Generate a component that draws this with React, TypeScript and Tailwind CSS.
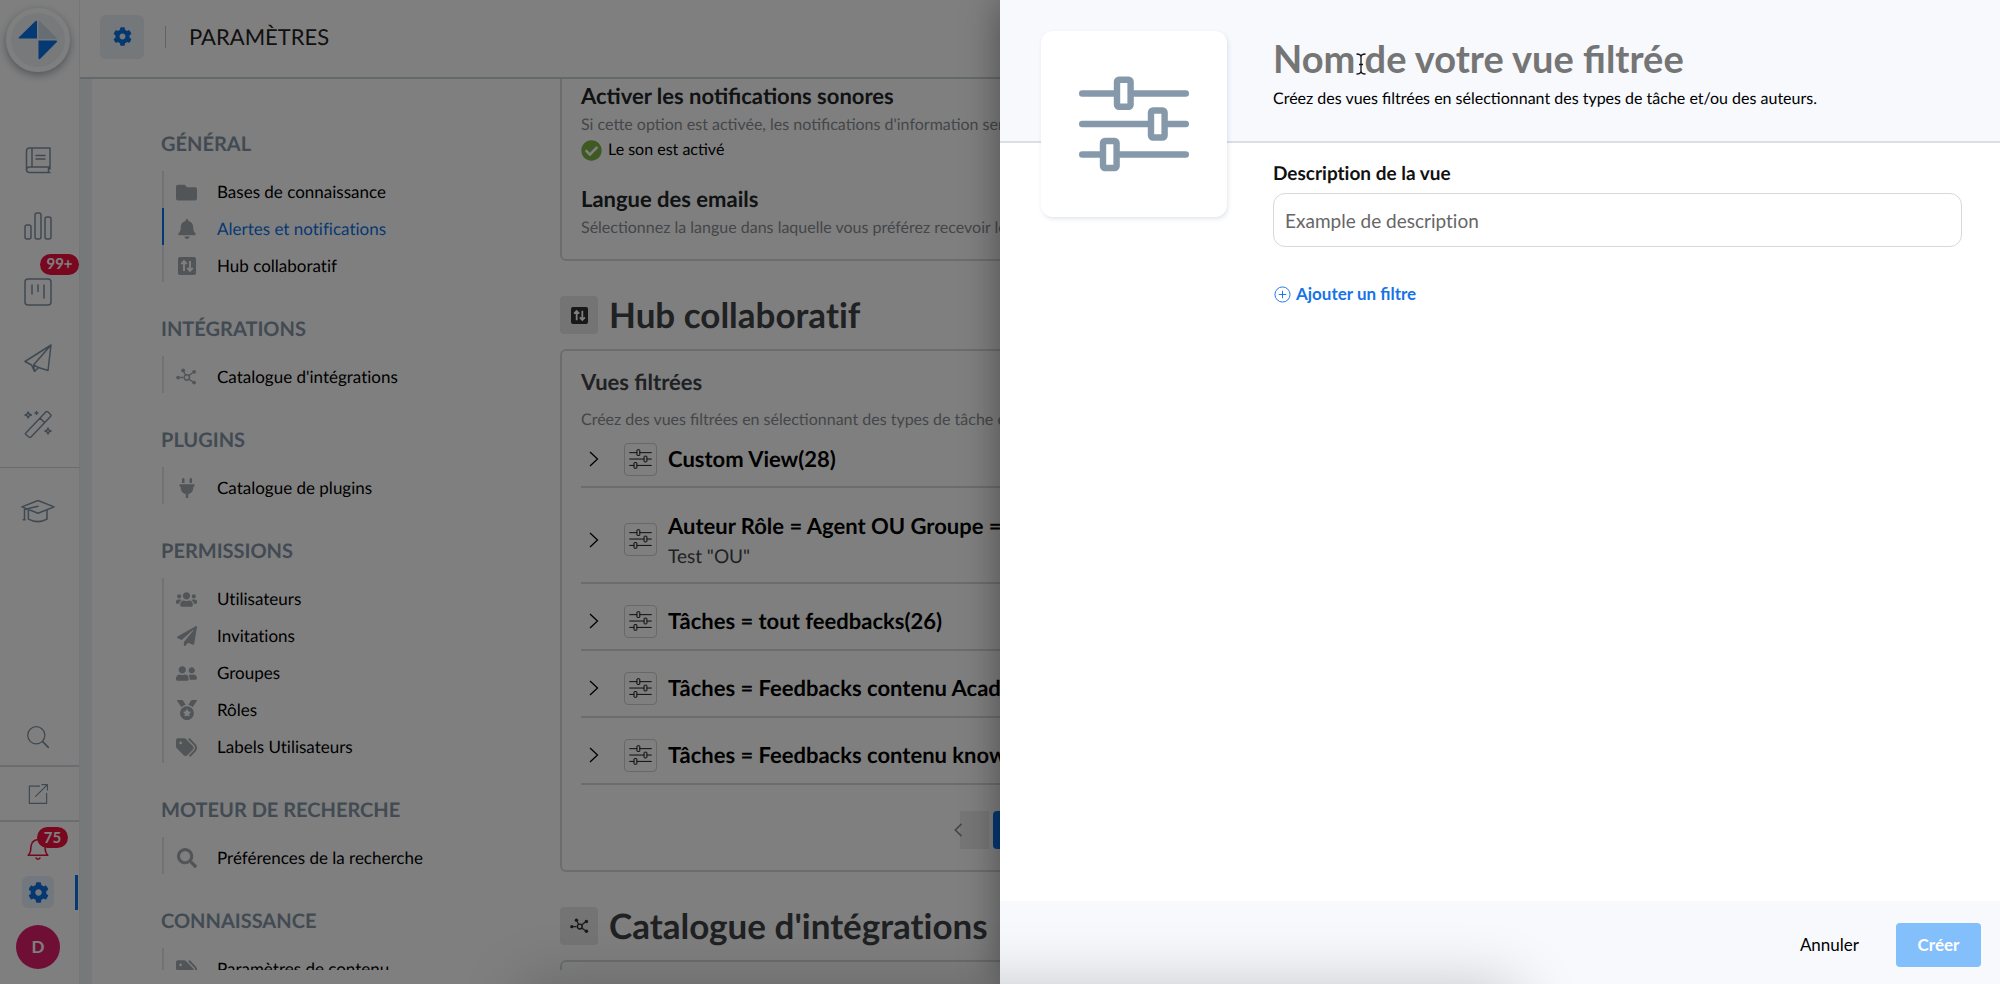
import React from 'react';
import { FaFolder, FaBell, FaPlug, FaUsers, FaPaperPlane, FaUserFriends, FaMedal, FaSearch, FaCheckCircle, FaCog } from 'react-icons/fa';
import { FaTags } from 'react-icons/fa6';

type IconProps = { className?: string };

function SlidersIcon({ className, heavy }: IconProps & { heavy?: boolean }) {
  const w = heavy ? 6.4 : 4.6;
  return (
    <svg viewBox="0 0 110 96" className={className} fill="none" stroke="currentColor" strokeWidth={w} aria-hidden="true">
      <path d="M3.200 17.500H37M53 17.500H106.800M3.200 48H71M87 48H106.800M3.200 78.500H23M39 78.500H106.800" strokeLinecap="round" />
      <rect x="38" y="3.800" width="13.600" height="27" rx="2" />
      <rect x="72" y="34.500" width="13.600" height="27" rx="2" />
      <rect x="24" y="65" width="13.600" height="27" rx="2" />
    </svg>
  );
}

function NetworkIcon({ className }: IconProps) {
  return (
    <svg viewBox="0 0 22 18" className={className} fill="currentColor" aria-hidden="true">
      <circle cx="2.200" cy="10" r="2" />
      <circle cx="7.500" cy="2.600" r="2" />
      <circle cx="19" cy="4" r="2" />
      <circle cx="19" cy="15.300" r="2" />
      <path d="M4 10h3.500M8.200 4l2 3.600M13.500 8l4-3M13.300 11.600l4.500 3" stroke="currentColor" strokeWidth="1.400" />
      <circle cx="11.300" cy="9.900" r="2.800" fill="none" stroke="currentColor" strokeWidth="1.700" />
    </svg>
  );
}

function HubIcon({ className }: IconProps) {
  return (
    <svg viewBox="0 0 18 18" className={className} aria-hidden="true">
      <rect width="18" height="18" rx="2" fill="currentColor" />
      <path d="M6 14V4.500M3.300 7L6 4.200 8.700 7M12 4v9.500M9.300 11l2.700 2.800 2.700-2.800" fill="none" stroke="#fff" strokeWidth="1.900" />
    </svg>
  );
}

function Line({ children, className }: IconProps & { children: React.ReactNode }) {
  return (
    <svg viewBox="0 0 28 28" className={className ?? 'size-7'} fill="none" stroke="currentColor" strokeWidth="1.500" strokeLinejoin="round" strokeLinecap="round" aria-hidden="true">
      {children}
    </svg>
  );
}

const sections = [
  { title: 'GÉNÉRAL', items: [
    { label: 'Bases de connaissance', icon: <FaFolder className="size-[21px]" /> },
    { label: 'Alertes et notifications', icon: <FaBell className="size-5" />, active: true },
    { label: 'Hub collaboratif', icon: <HubIcon className="size-[18px]" /> },
  ] },
  { title: 'INTÉGRATIONS', items: [{ label: "Catalogue d'intégrations", icon: <NetworkIcon className="w-[21px]" /> }] },
  { title: 'PLUGINS', items: [{ label: 'Catalogue de plugins', icon: <FaPlug className="size-5" /> }] },
  { title: 'PERMISSIONS', items: [
    { label: 'Utilisateurs', icon: <FaUsers className="size-[21px]" /> },
    { label: 'Invitations', icon: <FaPaperPlane className="size-5" /> },
    { label: 'Groupes', icon: <FaUserFriends className="size-[21px]" /> },
    { label: 'Rôles', icon: <FaMedal className="size-5" /> },
    { label: 'Labels Utilisateurs', icon: <FaTags className="size-[21px]" /> },
  ] },
  { title: 'MOTEUR DE RECHERCHE', items: [{ label: 'Préférences de la recherche', icon: <FaSearch className="size-5" /> }] },
  { title: 'CONNAISSANCE', items: [{ label: 'Paramètres de contenu', icon: <FaTags className="size-[21px]" /> }] },
];

const views = [
  { name: 'Custom View(28)' },
  { name: 'Auteur Rôle = Agent OU Groupe = Support', note: 'Test "OU"' },
  { name: 'Tâches = tout feedbacks(26)' },
  { name: 'Tâches = Feedbacks contenu Academy(12)' },
  { name: 'Tâches = Feedbacks contenu knowledge(14)' },
];

function Rail() {
  return (
    <nav aria-label="Principal" className="flex w-20 shrink-0 flex-col items-center border-r border-[#e6eaee] text-[#8093a5]">
      <a href="#accueil" aria-label="Accueil" className="mt-2 mr-[3px] flex size-16 items-center justify-center rounded-full border-[5px] border-white bg-[#eef3f6] shadow-[0_3px_8px_rgba(40,60,90,0.45)]">
        <svg viewBox="0 0 40 40" className="size-10" aria-hidden="true">
          <path d="M19 1.500V18.500H1.500Q0 18.500 1 17.300L17 1.500Q19 0 19 1.500Z" fill="#0b72e7" />
          <path d="M20.500 1.500Q20.500 0 22 1.500L38.500 17.500Q39.500 19 38 19H20.500Z" fill="#cddbe7" />
          <path d="M20.500 20.500H38Q40 20.500 38.800 22L22.500 38.500Q20.500 40 20.500 38Z" fill="#0b72e7" />
        </svg>
      </a>
      <div className="mt-[74px] mr-[3px] flex flex-col gap-[38px]">
        <a href="#contenus" aria-label="Contenus"><Line>
          <path d="M26 23V2H5.500Q2.500 2 2.500 5V23.500Q2.500 26.500 5.500 26.500H26M26 21H5.500Q2.500 21 2.500 23.800M8 2V21M12 9.500H21M12 13H21M24.500 21V26.500" />
        </Line></a>
        <a href="#stats" aria-label="Statistiques"><Line>
          <rect x="1" y="13" width="6" height="14" rx="2" /><rect x="11" y="1" width="6" height="26" rx="2" /><rect x="21" y="5" width="6" height="22" rx="2" />
        </Line></a>
        <a href="#hub" aria-label="Hub collaboratif" className="relative"><Line>
          <rect x="1" y="1" width="26" height="26" rx="3" /><path d="M8 7V16M14 7V13.500M20 7V20" />
        </Line>
          <span className="absolute -top-6 left-4 flex h-[21px] w-[39px] items-center justify-center rounded-full bg-[#f0103f] text-[15px] font-bold text-white">99+</span>
        </a>
        <a href="#envois" aria-label="Envois"><Line>
          <path d="M27 1L1 17.500L7.500 21L10.500 27.500L14.500 23.500L24 26.500Z M27 1L9.500 21L10.500 27.500M9.500 21L14.500 23.500" />
        </Line></a>
        <a href="#outils" aria-label="Outils"><Line>
          <path d="M1.800 23L22 1.800Q23 1 24 2L26.500 4.500Q27.500 5.500 26.500 6.500L7 27Q6 28 5 27L1.800 24.500Q1 23.700 1.800 23ZM16 8L20.500 12.500M4 2Q4.500 4.500 7.500 5Q4.500 5.500 4.200 8Q3.800 5.500 1 5Q3.800 4.500 4 2M12.500 1.500V4.500M11 3H14M24 18Q24.300 20.500 27 21Q24.300 21.500 24 24Q23.700 21.500 21 21Q23.700 20.500 24 18" />
        </Line></a>
      </div>
      <div className="mt-[29px] w-full border-t border-[#cfd8df] pt-[26px] pr-[3px]">
        <a href="#academie" aria-label="Académie" className="flex justify-center"><Line className="size-9">
          <path d="M1.500 10L14 5L26.500 10L14 15Z M6.500 12V19.500Q14 23.500 21 19.500V12M14 9.500L3.500 12V20M2.500 20H4" strokeWidth="1.200" />
        </Line></a>
      </div>
      <div className="mt-auto flex w-full flex-col items-center">
        <button type="button" aria-label="Rechercher" className="mr-[3px] mb-4"><Line className="size-6">
          <circle cx="12" cy="12" r="10" /><path d="M19.500 19.500L26 26" strokeWidth="2" />
        </Line></button>
        <div className="flex h-[57px] w-full items-center justify-center border-y-2 border-[#d5dde3] pr-[3px]">
          <a href="#site" aria-label="Ouvrir le site"><Line className="size-[22px]">
            <path d="M16 4H3V26H25V13M11 17L26 2M19 2H26V9" />
          </Line></a>
        </div>
        <button type="button" aria-label="Alertes" className="relative mt-4 mr-[3px] text-[#f0103f]"><Line className="size-[22px]">
          <path d="M1.500 22H26.500Q23 18.500 23 11Q22 3 14 2Q6 3 5 11Q5 18.500 1.500 22ZM11.500 25.500Q14 28.500 16.500 25.500" strokeWidth="2" />
        </Line>
          <span className="absolute -top-[11px] left-[10px] flex h-[21px] w-[31px] items-center justify-center rounded-full bg-[#f0103f] text-[15px] font-bold text-white">75</span>
        </button>
        <div className="relative mt-4 flex w-full justify-center pr-[3px] text-[#0b6fe0]">
          <a href="#parametres" aria-label="Paramètres" className="flex size-8 items-center justify-center rounded-md bg-[#e7f1fc]"><FaCog className="size-[21px]" /></a>
          <span className="absolute -top-px right-px h-[35px] w-[3px] bg-[#0b72e7]" />
        </div>
        <button type="button" className="mt-[17px] mr-[3px] mb-[15px] flex size-11 items-center justify-center rounded-full bg-[#e01f6d] text-[17px] font-bold text-white">D</button>
      </div>
    </nav>
  );
}

function SideMenu() {
  return (
    <nav aria-label="Paramètres" className="h-full w-[468px] shrink-0 overflow-hidden pt-[50px] pl-[69px] [font-variant-ligatures:none]">
      {sections.map((s) => (
        <section key={s.title} className="mb-8">
          <h2 className="mb-3 text-xl leading-[30px] font-bold text-[#8495a6]">{s.title}</h2>
          <ul>
            {s.items.map((it) => (
              <li key={it.label}>
                <a href="#section" className={it.active ? 'ml-px flex h-[37px] items-center border-l-2 border-[#0b72e7] pt-[5px] text-[#0b72e7]' : 'ml-px flex h-[37px] items-center border-l-2 border-[#e1e7ec] pt-[5px] text-black'}>
                  <span className="ml-[11px] flex w-[23px] justify-center text-[#a3abb1]">{it.icon}</span>
                  <span className="ml-[19px] text-[17px]">{it.label}</span>
                </a>
              </li>
            ))}
          </ul>
        </section>
      ))}
    </nav>
  );
}

function PageTitle({ icon, children }: { icon: React.ReactNode; children: React.ReactNode }) {
  return (
    <div className="mt-[35px] mb-[15px] flex items-center gap-[11px]">
      <span className="flex size-[38px] items-center justify-center rounded-sm bg-[#e8e8e8] text-[#303030]">{icon}</span>
      <h1 className="text-[35px] leading-[38px] font-bold text-[#404347] [font-variant-ligatures:none]">{children}</h1>
    </div>
  );
}

function Settings() {
  return (
    <main className="h-full grow overflow-hidden pr-10">
      <section className="-mt-2 h-[190px] rounded-md border-2 border-[#d4dade] px-[19px] pt-[9px] whitespace-nowrap">
        <h2 className="text-[22px] leading-7 font-bold text-[#222427]">Activer les notifications sonores</h2>
        <p className="mt-0.5 text-base leading-[26px] text-[#8a8d92]">Si cette option est activée, les notifications d'information seront accompagnées d'un son.</p>
        <p className="flex items-center gap-1.5 text-base leading-6 text-black"><FaCheckCircle className="size-[21px] text-[#7cb342]" />Le son est activé</p>
        <h2 className="mt-[23px] text-[22px] leading-7 font-bold text-[#222427]">Langue des emails</h2>
        <p className="mt-0.5 text-base leading-[26px] text-[#8a8d92]">Sélectionnez la langue dans laquelle vous préférez recevoir les emails.</p>
      </section>

      <PageTitle icon={<HubIcon className="size-[17px]" />}>Hub collaboratif</PageTitle>
      <section className="h-[523px] rounded-md border-2 border-[#d4dade] px-[19px] pt-[17px] whitespace-nowrap">
        <h2 className="text-[22px] leading-7 font-bold text-[#404347]">Vues filtrées</h2>
        <p className="mt-3 text-base leading-6 text-[#8a8d92]">Créez des vues filtrées en sélectionnant des types de tâche et/ou des auteurs.</p>
        <ul>
          {views.map((v, i) => (
            <li key={v.name} className={v.note ? 'flex h-24 items-center border-b-2 border-[#d4dade] pt-[9px]' : i === 0 ? 'flex h-14 items-center border-b-2 border-[#d4dade]' : 'flex h-[67px] items-center border-b-2 border-[#d4dade] pt-[9px]'}>
              <button type="button" aria-label="Déplier" className="ml-2 w-[10px]">
                <svg viewBox="0 0 10 16" className="h-4 w-[10px]" fill="none" stroke="#000" strokeWidth="1.300" aria-hidden="true"><path d="M1 1L8.500 8L1 15" /></svg>
              </button>
              <span className="ml-[25px] flex size-[33px] items-center justify-center rounded-sm border border-[#d0d0d0] text-[#111]"><SlidersIcon className="w-[23px]" /></span>
              <div className="ml-[11px] text-black">
                <h3 className={v.note ? 'pt-1 text-[22px] leading-[30px] font-bold' : 'text-[22px] leading-[30px] font-bold'}>{v.name}</h3>
                {v.note && <p className="text-[19px] leading-8 text-[#404347]">{v.note}</p>}
              </div>
            </li>
          ))}
        </ul>
        <div className="mt-[26px] flex items-center gap-1 pl-[372px]">
          <button type="button" aria-label="Page précédente" className="flex h-[38px] w-9 items-center bg-linear-to-r from-transparent from-20% to-[#ececec] to-20% text-[#909090]">
            <svg viewBox="0 0 10 16" className="h-[14px] w-[10px]" fill="none" stroke="currentColor" strokeWidth="2" aria-hidden="true"><path d="M9 1L2 8L9 15" /></svg>
          </button>
          <button type="button" className="h-[38px] w-[38px] rounded-sm bg-[#0b72e7] text-white">1</button>
        </div>
      </section>

      <PageTitle icon={<NetworkIcon className="w-[19px]" />}>Catalogue d'intégrations</PageTitle>
      <section className="h-40 rounded-md border-2 border-[#d4dade]" />
    </main>
  );
}

function Drawer() {
  return (
    <form role="dialog" aria-label="Nouvelle vue filtrée" className="absolute inset-y-0 right-0 flex w-1/2 flex-col bg-white shadow-[0_0_36px_rgba(0,0,0,0.4)]">
      <header className="flex h-[143px] shrink-0 gap-[46px] border-b-2 border-[#dbdfe4] bg-[#f7f9fd] pl-[41px]">
        <div className="z-10 mt-[31px] flex size-[186px] shrink-0 items-center justify-center rounded-xl bg-white text-[#8699aa] shadow-[1px_2px_4px_rgba(60,80,120,0.15)]">
          <SlidersIcon heavy className="w-[110px]" />
        </div>
        <div className="relative grow pt-[31px] pr-10">
          <input aria-label="Nom de la vue" placeholder="Nom de votre vue filtrée" className="block h-[54px] w-full bg-transparent text-[38px] font-bold outline-none placeholder:text-[#757575]" />
          <p className="mt-px text-base leading-[26px] text-black">Créez des vues filtrées en sélectionnant des types de tâche et/ou des auteurs.</p>
          <svg viewBox="0 0 10 22" className="absolute top-[53px] left-[83px] h-[22px] w-[10px]" fill="none" stroke="#111" strokeWidth="1.300" aria-hidden="true">
            <path d="M0.500 1Q5 1 5 4V18Q5 21 0.500 21M9.500 1Q5 1 5 4M5 18Q5 21 9.500 21M3 11.500H7" />
          </svg>
        </div>
      </header>
      <div className="grow pt-[17px] pr-[38px] pl-[273px]">
        <label htmlFor="desc" className="block text-[19px] leading-7 font-bold text-[#111] [font-variant-ligatures:none]">Description de la vue</label>
        <input id="desc" placeholder="Example de description" className="mt-[5px] block h-[54px] w-full rounded-xl border border-[#d6d8da] px-[11px] text-[19px] outline-none [font-variant-ligatures:none] placeholder:text-[#666]" />
        <button type="button" className="mt-[35px] flex items-center gap-[5px] pl-px text-[17px] leading-6 font-bold text-[#1673e8]">
          <svg viewBox="0 0 18 18" className="size-[17px]" fill="none" stroke="currentColor" aria-hidden="true"><circle cx="9" cy="9" r="8" /><path d="M9 5V13M5 9H13" /></svg>
          Ajouter un filtre
        </button>
      </div>
      <footer className="flex h-[83px] shrink-0 items-center justify-end gap-[37px] bg-[#f7f9fd] pt-1 pr-[19px] text-[17px]">
        <button type="button" className="text-black">Annuler</button>
        <button type="submit" disabled className="h-11 w-[85px] rounded-sm bg-[#82bffb] font-bold text-white">Créer</button>
      </footer>
    </form>
  );
}

export default function App() {
  return (
    <div className="relative flex h-screen overflow-hidden bg-white font-[Lato,sans-serif] [text-rendering:geometricPrecision]">
      <Rail />
      <div className="flex min-w-0 grow flex-col">
        <header className="flex h-[79px] shrink-0 items-center border-b-2 border-[#c9d2d6] pb-1 pl-5">
          <span className="flex size-11 items-center justify-center rounded-md bg-[#e9f0f4] text-[#0b6fe0]"><FaCog className="size-[19px]" /></span>
          <span className="ml-[21px] h-[22px] w-px bg-[#c4c4c4]" />
          <h1 className="ml-[23px] text-[22px] text-[#222]">PARAMÈTRES</h1>
        </header>
        <div className="flex min-h-0 grow border-l-[12px] border-[#edf3f4] pb-[14px]">
          <SideMenu />
          <Settings />
        </div>
      </div>
      <div className="absolute inset-0 bg-black/50" />
      <Drawer />
      <div className="pointer-events-none absolute top-full right-[24%] left-[26%] h-20 rounded-2xl shadow-[0_0_64px_rgba(0,0,0,0.2)]" />
    </div>
  );
}
